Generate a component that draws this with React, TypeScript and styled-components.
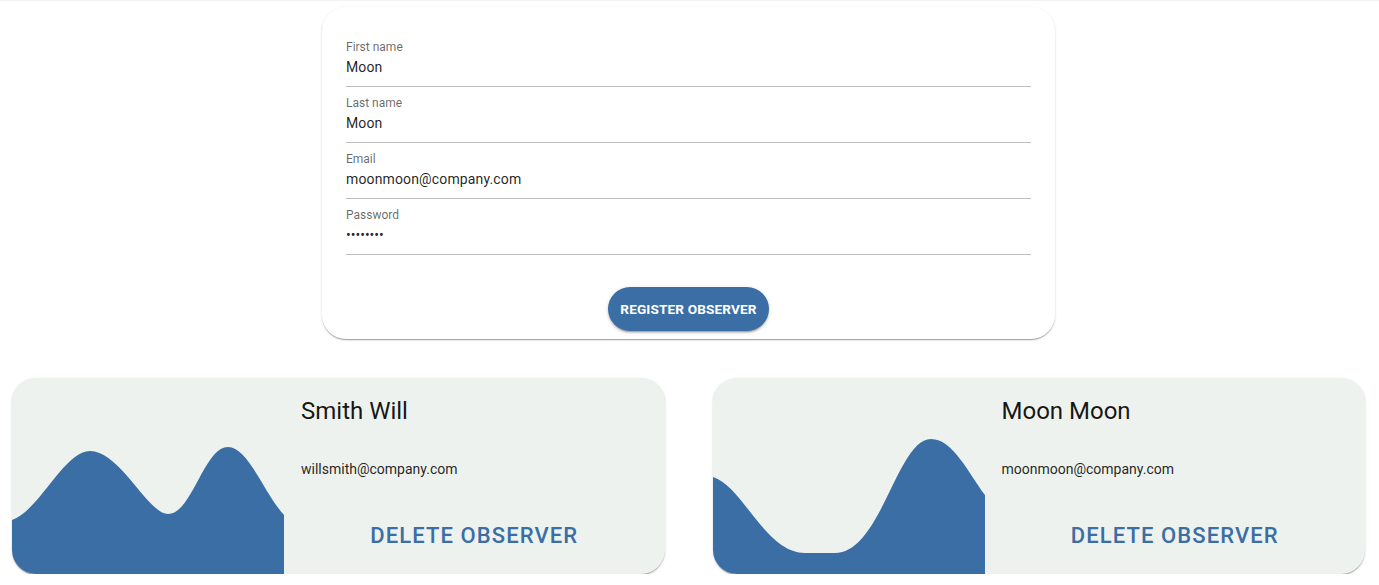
import React from "react";
import styled, { createGlobalStyle } from "styled-components";

const GlobalStyle = createGlobalStyle`
  html, body { margin: 0; padding: 0; background: #ffffff; }
  body { font-family: Roboto, "Liberation Sans", Arial, sans-serif; }
  * { box-sizing: border-box; }
`;

const Page = styled.div`
  width: 1379px;
  display: flex;
  flex-direction: column;
  align-items: center;
`;

const TopLine = styled.div`
  align-self: stretch;
  height: 1px;
  background: #f2f2f2;
`;

const FormCard = styled.div`
  width: 733px;
  margin: 6px 2px 0 0;
  padding: 32px 24px 8px;
  background: #fff;
  border-radius: 24px;
  box-shadow: 0px 2px 1px -1px rgba(0,0,0,0.2), 0px 1px 1px 0px rgba(0,0,0,0.14), 0px 1px 3px 0px rgba(0,0,0,0.12);
  display: flex;
  flex-direction: column;
  gap: 8px;
`;

const Field = styled.div`
  display: flex;
  flex-direction: column;
  padding-bottom: 8px;
  border-bottom: 1px solid rgba(0, 0, 0, 0.26);
`;

const Label = styled.div`
  font-size: 12px;
  line-height: 17px;
  color: rgba(0, 0, 0, 0.6);
`;

const Value = styled.div<{ $secret?: boolean }>`
  font-size: 14px;
  line-height: 22px;
  color: rgba(0, 0, 0, 0.87);
  letter-spacing: ${(p) => (p.$secret ? "0" : "0.01em")};
`;

const Actions = styled.div`
  display: flex;
  justify-content: center;
  margin-top: 24px;
`;

const RegisterButton = styled.button`
  height: 44px;
  padding: 0 12px;
  border: none;
  border-radius: 22px;
  background: #3a6ea5;
  color: #fff;
  font-family: Roboto, "Liberation Sans", Arial, sans-serif;
  font-size: 13.6px;
  font-weight: 700;
  letter-spacing: 0.01em;
  text-transform: uppercase;
  box-shadow: 0px 3px 1px -2px rgba(0,0,0,0.2), 0px 2px 2px 0px rgba(0,0,0,0.14), 0px 1px 5px 0px rgba(0,0,0,0.12);
  cursor: pointer;
`;

const CardGrid = styled.div`
  align-self: stretch;
  display: grid;
  grid-template-columns: 1fr 1fr;
  gap: 48px;
  padding: 0 14px 0 12px;
  margin-top: 39px;
`;

const ObserverCard = styled.div`
  height: 196px;
  display: grid;
  grid-template-columns: 272px 1fr;
  background: #eef2ee;
  border-radius: 24px;
  overflow: hidden;
  box-shadow: 0px 2px 1px -1px rgba(0,0,0,0.2), 0px 1px 1px 0px rgba(0,0,0,0.14), 0px 1px 3px 0px rgba(0,0,0,0.12);
`;

const WaveBox = styled.div`
  height: 196px;
  svg { display: block; width: 100%; height: 100%; }
`;

const Content = styled.div`
  display: flex;
  flex-direction: column;
`;

const Info = styled.div`
  padding: 17px 0 0 17px;
  display: flex;
  flex-direction: column;
`;

const Name = styled.div`
  font-size: 24px;
  line-height: 32px;
  color: rgba(0, 0, 0, 0.92);
`;

const Email = styled.div`
  margin-top: 32px;
  font-size: 14px;
  line-height: 20px;
  color: rgba(0, 0, 0, 0.87);
`;

const DeleteButton = styled.button`
  margin-top: 35px;
  height: 42px;
  align-self: center;
  border: none;
  background: transparent;
  color: #3a6ea5;
  font-family: Roboto, "Liberation Sans", Arial, sans-serif;
  font-size: 22px;
  font-weight: 500;
  letter-spacing: 0.05em;
  text-transform: uppercase;
  padding: 0 8px;
  cursor: pointer;
`;

const waves: Record<string, string> = {
  smith:
    "M0,142 C28,132 52,73 78,73 C108,73 136,136 156,136 C180,136 192,69 216,69 C236,69 252,115 272,137 V196 H0 Z",
  moon:
    "M0,99 C30,108 52,175 92,175 L122,175 C168,175 184,61 218,61 C240,61 256,96 272,117 V196 H0 Z",
};

const Wave = ({ kind }: { kind: string }) => (
  <WaveBox>
    <svg viewBox="0 0 272 196" preserveAspectRatio="none">
      <path d={waves[kind]} fill="#3a6ea5" />
    </svg>
  </WaveBox>
);

const fields = [
  { label: "First name", value: "Moon" },
  { label: "Last name", value: "Moon" },
  { label: "Email", value: "moonmoon@company.com" },
  { label: "Password", value: "••••••••", secret: true },
];

const observers = [
  { name: "Smith Will", email: "willsmith@company.com", wave: "smith" },
  { name: "Moon Moon", email: "moonmoon@company.com", wave: "moon" },
];

export default function App() {
  return (
    <>
      <GlobalStyle />
      <Page>
        <TopLine />
        <FormCard>
          {fields.map((f) => (
            <Field key={f.label}>
              <Label>{f.label}</Label>
              <Value $secret={f.secret}>{f.value}</Value>
            </Field>
          ))}
          <Actions>
            <RegisterButton>Register Observer</RegisterButton>
          </Actions>
        </FormCard>
        <CardGrid>
          {observers.map((o) => (
            <ObserverCard key={o.name}>
              <Wave kind={o.wave} />
              <Content>
                <Info>
                  <Name>{o.name}</Name>
                  <Email>{o.email}</Email>
                </Info>
                <DeleteButton>Delete Observer</DeleteButton>
              </Content>
            </ObserverCard>
          ))}
        </CardGrid>
      </Page>
    </>
  );
}
